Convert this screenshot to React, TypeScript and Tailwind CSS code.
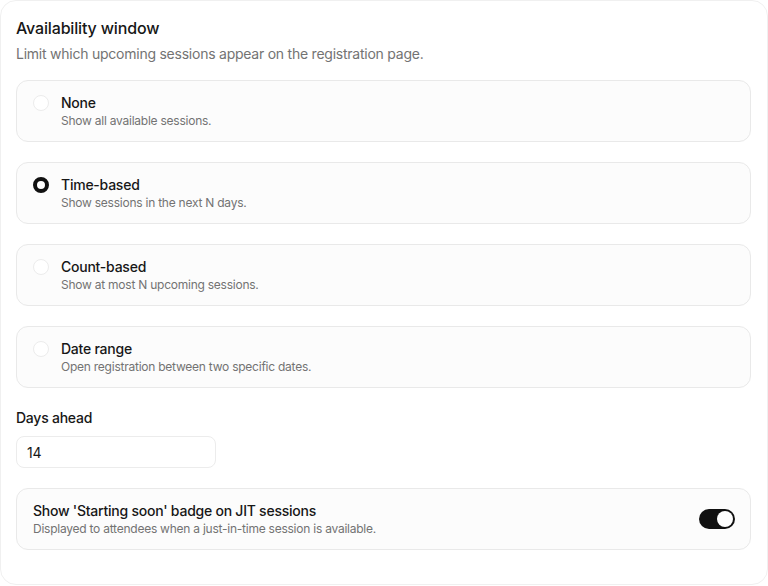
import React, { useState } from 'react';

type Mode = 'none' | 'time' | 'count' | 'range';

const options: { id: Mode; label: string; hint: string }[] = [
  { id: 'none', label: 'None', hint: 'Show all available sessions.' },
  { id: 'time', label: 'Time-based', hint: 'Show sessions in the next N days.' },
  { id: 'count', label: 'Count-based', hint: 'Show at most N upcoming sessions.' },
  { id: 'range', label: 'Date range', hint: 'Open registration between two specific dates.' },
];

const App: React.FC = () => {
  const [mode, setMode] = useState<Mode>('time');
  const [days, setDays] = useState('14');
  const [badge, setBadge] = useState(true);

  return (
    <div className="w-[768px] h-[586px] bg-white text-[#171717] tracking-[-0.015em]" style={{ fontFamily: 'Inter, "Noto Sans", sans-serif' }}>
      <div className="h-[585px] rounded-2xl border border-[#f0f0f0] pl-[15px] pr-4 pt-[15px]">
        <h2 className="text-base leading-6 font-medium tracking-[-0.01em]">Availability window</h2>
        <p className="mt-1 text-sm leading-5 text-[#737373]">
          Limit which upcoming sessions appear on the registration page.
        </p>

        <div className="mt-4 flex flex-col gap-5">
          {options.map((opt) => {
            const active = mode === opt.id;
            return (
              <label
                key={opt.id}
                onClick={() => setMode(opt.id)}
                className="flex items-start gap-3 rounded-xl border border-[#e9e9e9] bg-[#fcfcfc] pl-4 pr-4 py-3 cursor-pointer"
              >
                <span
                  className={`mt-0.5 w-4 h-4 shrink-0 rounded-full bg-white ${
                    active ? 'border-[4px] border-[#111111]' : 'border border-[#ececec]'
                  }`}
                />
                <span className="flex flex-col">
                  <span className="text-sm leading-5 font-medium">{opt.label}</span>
                  <span className="text-xs leading-4 text-[#737373]">{opt.hint}</span>
                </span>
              </label>
            );
          })}
        </div>

        <div className="mt-5">
          <div className="text-sm leading-5 font-medium">Days ahead</div>
          <input
            type="text"
            value={days}
            onChange={(e) => setDays(e.target.value)}
            className="mt-2 w-[200px] h-8 rounded-lg border border-[#ececec] bg-white px-[10px] text-sm text-[#171717] focus:outline-none"
          />
        </div>

        <div className="mt-5 flex items-center justify-between rounded-xl border border-[#e9e9e9] bg-[#fcfcfc] pl-4 pr-[15px] py-3">
          <div className="flex flex-col">
            <span className="text-sm leading-5 font-medium">Show 'Starting soon' badge on JIT sessions</span>
            <span className="text-xs leading-4 text-[#737373]">
              Displayed to attendees when a just-in-time session is available.
            </span>
          </div>
          <button
            onClick={() => setBadge(!badge)}
            className={`w-9 h-5 rounded-full p-0.5 flex items-center ${
              badge ? 'bg-[#111111] justify-end' : 'bg-[#e5e5e5] justify-start'
            }`}
          >
            <span className="w-4 h-4 rounded-full bg-white" />
          </button>
        </div>
      </div>
    </div>
  );
};

export default App;
